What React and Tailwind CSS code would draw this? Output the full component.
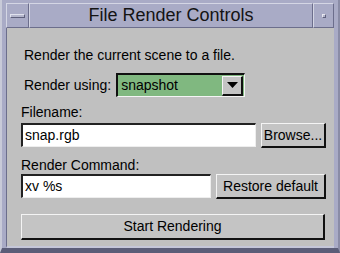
export default function App() {
  const font = { fontFamily: '"Liberation Sans", Arial, Helvetica, sans-serif' }
  const raised = 'border-t border-l border-t-[#f4f4f4] border-l-[#f4f4f4] border-b-2 border-r-2 border-b-[#111] border-r-[#111] bg-[#c4c4c4]'
  const sunken = 'border-t-2 border-l-2 border-t-[#222] border-l-[#222] border-b border-r border-b-[#eee] border-r-[#eee] bg-white'

  return (
    <div style={font} className="w-[340px] h-[253px] bg-[#a9abc6] border-l-2 border-l-[#c8cad8] border-r-2 border-r-[#8a8ca6] border-b-[5px] border-b-[#5b5d78] flex flex-col pt-[3px] pl-[4px] pr-[4px] text-[14px] text-black">
      {/* title bar */}
      <div className="flex h-[25px] shrink-0">
        <div className="w-[23px] flex items-center justify-center border-t border-l border-[#d4d6e4] border-b border-r border-b-[#6c6e8c] border-r-[#6c6e8c] bg-[#a9abc6]">
          <div className="w-[15px] h-[4px] border-t border-l border-[#e0e2ee] border-b border-r border-b-[#5e607c] border-r-[#5e607c] bg-[#b4b6cc]" />
        </div>
        <div className="flex-1 flex items-center justify-center text-[18px] text-[#141414] border-t border-l border-[#d4d6e4] border-b border-r border-b-[#6c6e8c] border-r-[#6c6e8c]">
          File Render Controls
        </div>
        <div className="w-[21px] flex items-center justify-center border-t border-l border-[#d4d6e4] border-b border-r border-b-[#6c6e8c] border-r-[#6c6e8c]">
          <div className="w-[4px] h-[4px] border-t border-l border-[#e8e8f0] border-b border-r border-b-[#5e607c] border-r-[#5e607c] bg-[#b4b6cc]" />
        </div>
      </div>

      {/* body */}
      <div className="flex-1 bg-[#c0c0c0] border-l border-l-[#6c6e8c] border-b-2 border-b-[#c4c6d8] flex flex-col pl-[14px] pr-[7px] pt-[19px]">
        <p className="leading-[16px] pl-[3px]">Render the current scene to a file.</p>

        <div className="flex items-center mt-[10px] pl-[3px]">
          <span className="mr-[5px]">Render using:</span>
          <div className="w-[129px] h-[24px] flex items-center border-t-2 border-l-2 border-t-[#111] border-l-[#111] border-b border-r border-b-[#f4f4f4] border-r-[#f4f4f4] bg-[#80b880] pl-[3px] pr-[1px]">
            <span className="flex-1">snapshot</span>
            <div className="w-[21px] h-[20px] flex items-center justify-center border-t border-l border-t-[#f4f4f4] border-l-[#f4f4f4] border-b-2 border-r-2 border-b-[#111] border-r-[#111] bg-[#c4c4c4]">
              <svg width="11" height="6" viewBox="0 0 11 6"><path d="M0 0H11L5.5 6Z" fill="#000" /></svg>
            </div>
          </div>
        </div>

        <p className="leading-[16px] mt-[7px]">Filename:</p>
        <div className="flex mt-[3px] gap-[5px]">
          <div className={`w-[235px] h-[24px] flex items-center pl-[2px] ${sunken}`}>snap.rgb</div>
          <div className={`w-[65px] h-[25px] flex items-center justify-center ${raised}`}>Browse...</div>
        </div>

        <p className="leading-[16px] mt-[9px]">Render Command:</p>
        <div className="flex mt-[1px] gap-[5px]">
          <div className={`w-[190px] h-[24px] flex items-center pl-[2px] ${sunken}`}>xv %s</div>
          <div className={`w-[110px] h-[25px] flex items-center justify-center ${raised}`}>Restore default</div>
        </div>

        <div className={`w-[304px] h-[26px] mt-[15px] flex items-center justify-center ${raised}`}>Start Rendering</div>
      </div>
    </div>
  )
}
